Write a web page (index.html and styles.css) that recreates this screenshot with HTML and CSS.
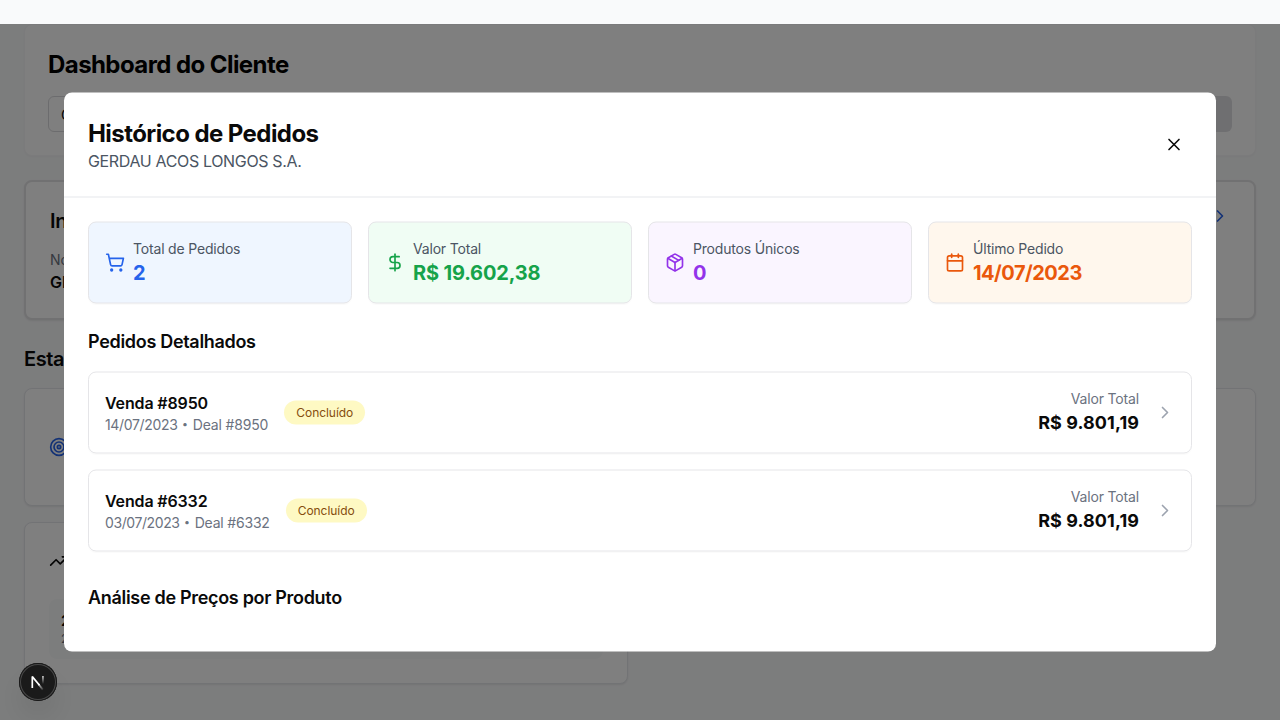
FILE: index.html
```html
<!DOCTYPE html>
<html lang="pt-BR">
<head>
<meta charset="utf-8">
<title>Dashboard do Cliente</title>
<link rel="stylesheet" href="styles.css">
</head>
<body>
<main class="page">
  <section class="card search">
    <h1 class="title">Dashboard do Cliente</h1>
    <div class="search-row"><div class="field">G</div><div class="search-btn"></div></div>
  </section>
  <section class="card info">
    <div class="info-head"><h2 class="section-title">In</h2>
      <svg class="icon blue" viewBox="0 0 24 24"><path d="m9 18 6-6-6-6"/></svg></div>
    <div class="info-label">No</div>
    <div class="info-value">GE</div>
  </section>
  <h2 class="section-title stats-title">Esta</h2>
  <section class="card metric">
    <svg class="icon blue" viewBox="0 0 24 24"><circle cx="12" cy="12" r="10"/><circle cx="12" cy="12" r="6"/><circle cx="12" cy="12" r="2"/></svg>
  </section>
  <section class="card trend">
    <div class="trend-head"><svg class="icon" viewBox="0 0 24 24"><path d="M22 7 13.5 15.5 8.500 10.5 2 17"/><path d="M16 7h6v6"/></svg></div>
    <div class="trend-item"><div class="trend-name">2</div><div class="trend-sub">2</div></div>
  </section>
</main>

<div class="overlay">
  <div class="modal">
    <header class="modal-head">
      <div><h2 class="title">Histórico de Pedidos</h2><p class="client">GERDAU ACOS LONGOS S.A.</p></div>
      <div class="close"><svg class="icon" viewBox="0 0 24 24"><path d="M18 6 6 18"/><path d="m6 6 12 12"/></svg></div>
    </header>
    <div class="modal-body">
      <div class="stats">
        <div class="stat stat-blue">
          <svg class="icon" viewBox="0 0 24 24"><circle cx="8" cy="21" r="1"/><circle cx="19" cy="21" r="1"/><path d="M2.05 2.05h2l2.66 12.42a2 2 0 0 0 2 1.58h9.78a2 2 0 0 0 1.95-1.57l1.65-7.43H5.12"/></svg>
          <div><div class="stat-label">Total de Pedidos</div><div class="stat-value">2</div></div>
        </div>
        <div class="stat stat-green">
          <svg class="icon" viewBox="0 0 24 24"><path d="M12 2v20"/><path d="M17 5H9.500a3.500 3.500 0 0 0 0 7h5a3.500 3.500 0 0 1 0 7H6"/></svg>
          <div><div class="stat-label">Valor Total</div><div class="stat-value">R$ 19.602,38</div></div>
        </div>
        <div class="stat stat-purple">
          <svg class="icon" viewBox="0 0 24 24"><path d="M11 21.730a2 2 0 0 0 2 0l7-4A2 2 0 0 0 21 16V8a2 2 0 0 0-1-1.730l-7-4a2 2 0 0 0-2 0l-7 4A2 2 0 0 0 3 8v8a2 2 0 0 0 1 1.730z"/><path d="M12 22V12"/><path d="M3.290 7 12 12l8.710-5"/><path d="m7.500 4.270 9 5.150"/></svg>
          <div><div class="stat-label">Produtos Únicos</div><div class="stat-value">0</div></div>
        </div>
        <div class="stat stat-orange">
          <svg class="icon" viewBox="0 0 24 24"><path d="M8 2v4"/><path d="M16 2v4"/><rect width="18" height="18" x="3" y="4" rx="2"/><path d="M3 10h18"/></svg>
          <div><div class="stat-label">Último Pedido</div><div class="stat-value date-value">14/07/2023</div></div>
        </div>
      </div>
      <h3 class="subtitle">Pedidos Detalhados</h3>
      <div class="orders">
        <div class="order">
          <div class="order-main"><div><div class="order-name">Venda #8950</div><div class="order-meta"><span class="date">14/07/2023</span> <span class="dot">•</span> Deal #8950</div></div><span class="badge">Concluído</span></div>
          <div class="order-side"><div><div class="order-meta">Valor Total</div><div class="order-total">R$ 9.801,19</div></div><svg class="icon muted" viewBox="0 0 24 24"><path d="m9 18 6-6-6-6"/></svg></div>
        </div>
        <div class="order">
          <div class="order-main"><div><div class="order-name">Venda #6332</div><div class="order-meta order-meta-tight"><span class="date">03/07/2023</span> <span class="dot">•</span> Deal #6332</div></div><span class="badge">Concluído</span></div>
          <div class="order-side"><div><div class="order-meta">Valor Total</div><div class="order-total">R$ 9.801,19</div></div><svg class="icon muted" viewBox="0 0 24 24"><path d="m9 18 6-6-6-6"/></svg></div>
        </div>
      </div>
      <h3 class="subtitle analysis">Análise de Preços por Produto</h3>
    </div>
  </div>
</div>

<div class="dev-badge">
  <svg width="38" height="38" viewBox="0 0 38 38" fill="none">
    <defs>
      <linearGradient id="diag" x1="25" y1="12" x2="25" y2="21" gradientUnits="userSpaceOnUse"><stop stop-color="#fff"/><stop offset="1" stop-color="#fff" stop-opacity="0"/></linearGradient>
      <linearGradient id="tail" x1="19" y1="19" x2="25" y2="26" gradientUnits="userSpaceOnUse"><stop stop-color="#fff"/><stop offset="1" stop-color="#fff" stop-opacity="0.1"/></linearGradient>
    </defs>
    <path d="M13.300 25V13.600L20.500 22.300" stroke="#fff" stroke-width="1.700" stroke-linejoin="bevel"/>
    <path d="M19.400 21 23.800 26.600" stroke="url(#tail)" stroke-width="1.700"/>
    <path d="M23.200 13h1.500v8.500h-1.500z" fill="url(#diag)"/>
  </svg>
</div>
</body>
</html>
```
FILE: styles.css
```css
* { box-sizing: border-box; margin: 0; }
body {
  height: 720px;
  overflow: hidden;
  background: #f9fafb;
  color: #0a0a0a;
  font-family: Inter, "Liberation Sans", sans-serif;
  font-size: 14px;
  line-height: 20px;
}
.icon {
  display: block;
  flex: none;
  width: 20px;
  height: 20px;
  fill: none;
  stroke: currentColor;
  stroke-width: 2;
  stroke-linecap: round;
  stroke-linejoin: round;
}
.blue { color: #2563eb; }
.muted { color: #9ca3af; }
.title { margin-bottom: -2px; font-size: 24px; line-height: 34px; font-weight: 700; letter-spacing: -0.57px; }
.section-title { font-size: 20px; line-height: 28px; font-weight: 600; letter-spacing: -0.4px; }

/* Dashboard */
.page { display: flex; flex-direction: column; padding: 24px; }
.card { background: #fff; border: 1px solid #e5e7eb; border-radius: 8px; box-shadow: 0 1px 2px rgba(0, 0, 0, 0.08); }
.search { height: 132px; padding: 23px; border-color: #f7f7f8; margin-bottom: 24px; box-shadow: 0 1px 2px rgba(0, 0, 0, 0.03); }
.search .title { margin-bottom: 0; color: #000; }
.search-row { display: flex; justify-content: space-between; margin-top: 14px; }
.field { width: 800px; height: 36px; padding: 8px 12px; border: 1px solid #d9d9dc; border-radius: 6px; line-height: 20px; }
.search-btn { width: 120px; height: 36px; border-radius: 6px; background: #dfdfe2; }
.info { height: 140px; padding: 24px; border: 2px solid #e2e2e4; margin-bottom: 24px; }
.info-head { display: flex; justify-content: space-between; margin-bottom: 14px; }
.info-head .section-title { line-height: 30px; }
.info-label { color: #6b7280; }
.info-value { font-size: 16px; line-height: 24px; font-weight: 600; }
.stats-title { margin: 1px 0 15px; }
.metric { display: flex; align-items: center; height: 118px; padding: 24px; margin-bottom: 16px; }
.trend { width: 604px; height: 162px; padding: 24px; }
.trend-head { display: flex; align-items: center; height: 28px; margin-bottom: 24px; }
.trend-item { padding: 12px; border-radius: 8px; background: #f9fafb; }
.trend-name { font-weight: 600; }
.trend-sub { color: #6b7280; font-size: 12px; line-height: 16px; }

/* Order history dialog */
.overlay {
  position: fixed;
  inset: 24px 0 0;
  display: flex;
  align-items: center;
  justify-content: center;
  background: rgba(0, 0, 0, 0.5);
}
.modal { width: 1152px; margin-bottom: 1px; background: #fff; border-radius: 8px; transform: translateY(0.5px); }
.modal-head { display: flex; align-items: center; justify-content: space-between; padding: 24px; border-bottom: 1px solid #e5e7eb; }
.client { color: #4b5563; font-size: 16px; line-height: 24px; letter-spacing: -0.35px; }
.close { padding: 8px; }
.modal-body { padding: 24px; }
.stats { display: grid; grid-template-columns: repeat(4, 1fr); gap: 16px; margin-bottom: 24px; }
.stat { display: flex; align-items: center; gap: 8px; padding: 16px; border: 1px solid #e5e5e8; border-radius: 8px; box-shadow: 0 1px 1px rgba(0, 0, 0, 0.02); }
.stat-label { color: #4b5563; letter-spacing: -0.18px; }
.stat-value { font-size: 20px; line-height: 28px; font-weight: 700; letter-spacing: -0.17px; }
.date-value { letter-spacing: -0.52px; }
.stat-blue { background: #eff6ff; color: #2563eb; }
.stat-green { background: #f0fdf4; color: #16a34a; }
.stat-purple { background: #faf5ff; color: #9333ea; }
.stat-orange { background: #fff7ed; color: #ea580c; }
.subtitle { font-size: 18px; line-height: 28px; font-weight: 600; letter-spacing: -0.31px; margin-bottom: 16px; }
.orders { display: flex; flex-direction: column; gap: 16px; }
.order { display: flex; align-items: center; justify-content: space-between; height: 82px; padding: 16px; border: 1px solid #e5e5e8; border-radius: 8px; box-shadow: 0 1px 1px rgba(0, 0, 0, 0.02); }
.order-main, .order-side { display: flex; align-items: center; gap: 16px; }
.order-side { text-align: right; }
.order-name { font-size: 16px; line-height: 24px; font-weight: 600; letter-spacing: -0.14px; }
.order-meta { color: #6b7280; letter-spacing: -0.16px; }
.date { letter-spacing: -0.34px; }
.order-meta-tight { letter-spacing: -0.2px; }
.order-meta-tight .date { letter-spacing: -0.41px; }
.dot { display: inline-block; transform: scale(0.75); }
.order-total { font-size: 18px; line-height: 28px; font-weight: 700; letter-spacing: 0.08px; }
.badge { padding: 4px 12px; border-radius: 12px; background: #fef9c3; color: #854d0e; font-size: 12px; line-height: 16px; letter-spacing: -0.05px; }
.analysis { margin-top: 32px; }

/* Floating developer button */
.dev-badge {
  position: fixed;
  left: 19px;
  top: 663px;
  width: 38px;
  height: 38px;
  border-radius: 50%;
  background: #1a1a1a;
  box-shadow: inset 0 0 0 1px #171717, inset 0 0 0 2px #484848, 0 16px 32px -8px rgba(0, 0, 0, 0.24);
}
.dev-badge svg { display: block; }
```
